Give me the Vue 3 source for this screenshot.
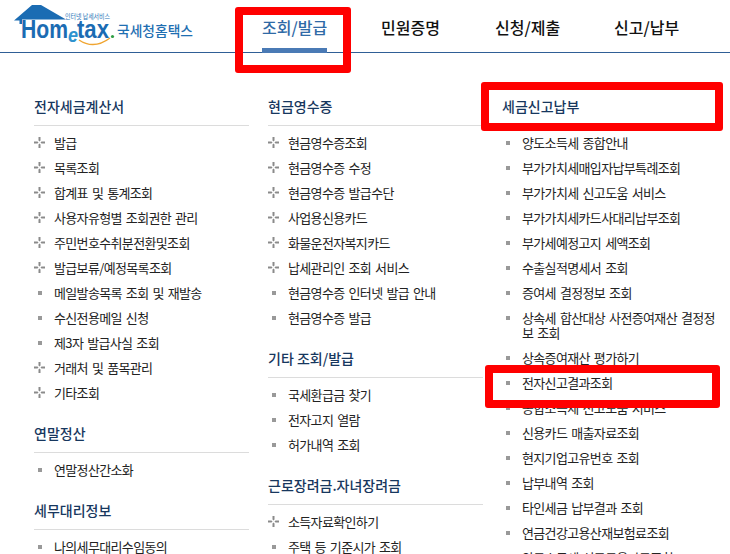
<script setup>
const nav = [
  { label: '조회/발급', active: true },
  { label: '민원증명' },
  { label: '신청/제출' },
  { label: '신고/납부' },
]
const p = (t) => ({ t, plus: true })
const s = (t) => ({ t, plus: false })
const columns = [
  [
    { title: '전자세금계산서', items: [p('발급'), p('목록조회'), p('합계표 및 통계조회'), p('사용자유형별 조회권한 관리'), p('주민번호수취분전환및조회'), p('발급보류/예정목록조회'), s('메일발송목록 조회 및 재발송'), s('수신전용메일 신청'), s('제3자 발급사실 조회'), p('거래처 및 품목관리'), p('기타조회')] },
    { title: '연말정산', items: [s('연말정산간소화')] },
    { title: '세무대리정보', items: [s('나의세무대리수임동의')] },
  ],
  [
    { title: '현금영수증', items: [p('현금영수증조회'), p('현금영수증 수정'), p('현금영수증 발급수단'), p('사업용신용카드'), p('화물운전자복지카드'), p('납세관리인 조회 서비스'), s('현금영수증 인터넷 발급 안내'), s('현금영수증 발급')] },
    { title: '기타 조회/발급', items: [s('국세환급금 찾기'), s('전자고지 열람'), s('허가내역 조회')] },
    { title: '근로장려금.자녀장려금', items: [p('소득자료확인하기'), s('주택 등 기준시가 조회')] },
  ],
  [
    { title: '세금신고납부', items: [s('양도소득세 종합안내'), s('부가가치세매입자납부특례조회'), s('부가가치세 신고도움 서비스'), s('부가가치세카드사대리납부조회'), s('부가세예정고지 세액조회'), s('수출실적명세서 조회'), s('증여세 결정정보 조회'), s('상속세 합산대상 사전증여재산 결정정보 조회'), s('상속증여재산 평가하기'), s('전자신고결과조회'), s('종합소득세 신고도움 서비스'), s('신용카드 매출자료조회'), s('현지기업고유번호 조회'), s('납부내역 조회'), s('타인세금 납부결과 조회'), s('연금건강고용산재보험료조회'), s('양도소득세 신고도움자료조회')] },
  ],
]
</script>

<template>
  <div class="page">
    <header class="top">
      <svg class="logo" width="200" height="50" viewBox="0 0 200 50" aria-label="Hometax 국세청홈택스">
        <path d="M14 20.500 L32 5 L41 5 L66 19.500 L22 19.500 L22 24 L19.500 24 L19.500 20.500 Z" fill="#1b6cb3" />
        <path d="M79 40 Q94 50 110 38" stroke="#f0a531" stroke-width="1.500" fill="none" />
        <text x="65" y="18.500" class="small" textLength="45" lengthAdjust="spacingAndGlyphs">인터넷 납세서비스</text>
        <text x="21" y="37.500" class="brand" textLength="47" lengthAdjust="spacingAndGlyphs">Hom</text>
        <text x="68" y="42" class="brand-e" textLength="10" lengthAdjust="spacingAndGlyphs">e</text>
        <text x="77" y="37.500" class="brand" textLength="32" lengthAdjust="spacingAndGlyphs">tax</text>
        <circle cx="112.500" cy="36.500" r="1.600" fill="#2f9e44" />
        <text x="117" y="35.500" class="kor" textLength="76" lengthAdjust="spacingAndGlyphs">국세청홈택스</text>
      </svg>
      <nav class="nav">
        <a v-for="n in nav" :key="n.label" class="nav-item" :class="{ active: n.active }">{{ n.label }}</a>
      </nav>
    </header>

    <main class="grid">
      <div v-for="(col, i) in columns" :key="i" class="col">
        <section v-for="sec in col" :key="sec.title" class="sec">
          <h3 class="title">{{ sec.title }}</h3>
          <ul class="list">
            <li v-for="it in sec.items" :key="it.t" class="item">
              <svg v-if="it.plus" class="plus" width="11" height="11" viewBox="0 0 11 11">
                <path d="M4.500 0h2v3.500l-1 1-1-1zM4.500 11h2V7.500l-1-1-1 1zM0 4.500v2h3.500l1-1-1-1zM11 4.500v2H7.500l-1-1 1-1z" fill="#8a8a8a" />
              </svg>
              <span v-else class="bullet"></span>
              <span class="label">{{ it.t }}</span>
            </li>
          </ul>
        </section>
      </div>
    </main>

    <div class="mark mark-a"></div>
    <div class="mark mark-b"></div>
    <div class="mark mark-c"></div>
  </div>
</template>

<style>
html, body { margin: 0; overflow: hidden; background: #fff; }
</style>

<style scoped>
.page {
  position: relative;
  width: 730px;
  height: 554px;
  overflow: hidden;
  font-family: "Noto Sans CJK KR", "Noto Sans", sans-serif;
  background: #fff;
}
.top {
  display: flex;
  height: 52px;
  border-bottom: 1px solid #2f5f96;
}
.logo { flex: none; margin-right: 62px; }
.small { font: 6.500px "Noto Sans CJK KR", sans-serif; fill: #2a75b8; }
.brand { font: bold 26px "Liberation Sans", sans-serif; fill: #1b6cb3; }
.brand-e { font: italic bold 20px "Liberation Sans", sans-serif; fill: #2f93cf; }
.kor { font: 500 14px "Noto Sans CJK KR", sans-serif; fill: #1f6fb2; }
.nav { display: flex; }
.nav-item {
  width: 65px;
  margin-right: 54px;
  padding-top: 15px;
  font-size: 16px;
  line-height: 24px;
  font-weight: 500;
  color: #111;
  white-space: nowrap;
  box-sizing: border-box;
  height: 53px;
}
.nav-item:nth-child(2) { margin-right: 49px; }
.nav-item.active {
  color: #2f6aa6;
  border-bottom: 5px solid #4a7ab5;
}
.grid {
  display: grid;
  grid-template-columns: repeat(3, 215px);
  column-gap: 19px;
  padding: 35px 0 0 34px;
}
.sec { margin-bottom: 10px; }
.title {
  margin: 0;
  height: 37px;
  font-size: 14px;
  line-height: 36px;
  font-weight: 500;
  color: #17375e;
  border-bottom: 1px solid #dcdcdc;
}
.list { margin: 4px 0 0; padding: 0; list-style: none; }
.item {
  display: flex;
  align-items: flex-start;
  padding: 5px 0;
  font-size: 13px;
  line-height: 15px;
  color: #222;
}
.plus { flex: none; margin: 2px 9px 0 0; }
.bullet {
  flex: none;
  width: 4px;
  height: 4px;
  margin: 6px 12px 0 4px;
  background: #999;
}
.label { flex: 1; letter-spacing: -.65px; word-spacing: 1.700px; word-break: break-all; }
.mark {
  position: absolute;
  box-sizing: border-box;
  border: 8px solid #f00;
  border-radius: 3px;
}
.mark-a { left: 235px; top: 7px; width: 116px; height: 66px; }
.mark-b { left: 481px; top: 82px; width: 242px; height: 49px; }
.mark-c { left: 485px; top: 365px; width: 235px; height: 43px; }
</style>
